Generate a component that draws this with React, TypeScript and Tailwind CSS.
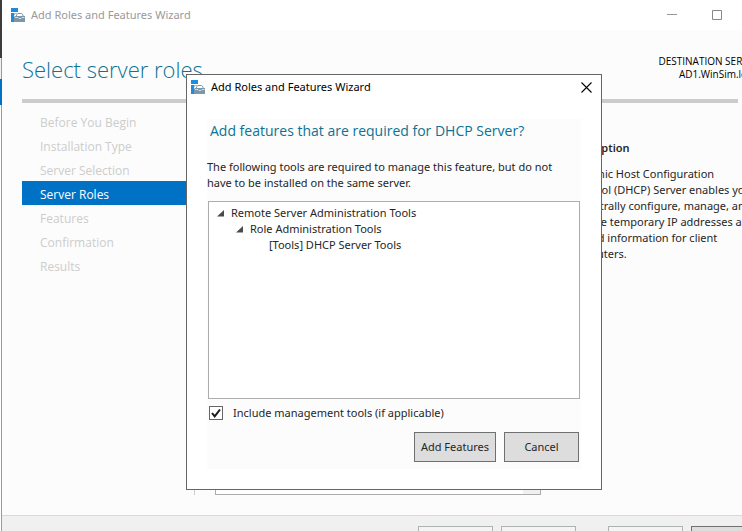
import { useState } from "react";

const steps = [
  "Before You Begin",
  "Installation Type",
  "Server Selection",
  "Server Roles",
  "Features",
  "Confirmation",
  "Results",
];

const descriptionLines = [
  "Dynamic Host Configuration",
  "Protocol (DHCP) Server enables you",
  "to centrally configure, manage, and",
  "provide temporary IP addresses and",
  "related information for client",
  "computers.",
];

function WizardIcon() {
  return (
    <svg width="15" height="15" viewBox="0 0 15 15" className="shrink-0" aria-hidden="true">
      <path d="M0 0h7v4H0zM0 5h3v9H0z" fill="#1e8bdc" />
      <path d="M3 5h3v1H4v1H3z" fill="#8cc4ec" />
      <path d="M5.5 8V6.8L7 5.5h3.5L12 6.8V8" fill="none" stroke="#7c97a8" />
      <path d="M4 8h10v6H3V9z" fill="#7c97a8" />
      <path d="M4 9.5h3l1 1h2l1-1h2.5" fill="none" stroke="#e8eef2" strokeWidth="0.8" />
    </svg>
  );
}

function Expander() {
  return (
    <svg width="7" height="7" viewBox="0 0 7 7" className="shrink-0" aria-hidden="true">
      <path d="M7 0v6.5H0z" fill="#4a4a4a" />
    </svg>
  );
}

function WizardDialog() {
  const [include, setInclude] = useState(true);
  return (
    <section
      role="dialog"
      aria-label="Add Roles and Features Wizard"
      className="absolute top-[74px] left-[186px] w-[416px] border border-[#666666] bg-white pb-5"
    >
      <header className="flex h-6 items-center pr-2 pl-1">
        <WizardIcon />
        <h2 className="ml-[5px] text-black">Add Roles and Features Wizard</h2>
        <button type="button" aria-label="Close" className="ml-auto p-px">
          <svg width="11" height="11" viewBox="0 0 11 11" className="block" aria-hidden="true">
            <path d="M.5.5l10 10M10.5.5l-10 10" stroke="#000" strokeWidth="1.1" />
          </svg>
        </button>
      </header>
      <div className="mx-5 mt-5 bg-[#fcfcfc]">
        <h3 className="pl-[3px] font-['Open_Sans','Noto_Sans',sans-serif] text-[14px] leading-6 text-[#0d7293]">
          Add features that are required for DHCP Server?
        </h3>
        <p className="mt-4 leading-4">
          The following tools are required to manage this feature, but do not
          <br />
          have to be installed on the same server.
        </p>
        <ul className="mt-[10px] mr-px ml-px h-[198px] border border-[#acacac] bg-white pt-[3px] pl-2 leading-4">
          <li>
            <div className="flex items-center gap-[7px]">
              <Expander />
              Remote Server Administration Tools
            </div>
            <ul className="pl-[19px]">
              <li>
                <div className="flex items-center gap-[7px]">
                  <Expander />
                  Role Administration Tools
                </div>
                <ul className="pl-[33px]">
                  <li>[Tools] DHCP Server Tools</li>
                </ul>
              </li>
            </ul>
          </li>
        </ul>
        <label className="mt-1 flex h-5 items-center pl-[2px]">
          <span className="grid">
            <input
              type="checkbox"
              checked={include}
              onChange={() => setInclude(!include)}
              className="col-start-1 row-start-1 size-[14px] appearance-none border border-[#666666] bg-white"
            />
            {include && (
              <svg width="14" height="14" viewBox="0 0 14 14" className="pointer-events-none col-start-1 row-start-1" aria-hidden="true">
                <path d="M3 7l2.7 3.4L11 3.5" fill="none" stroke="#1a1a1a" strokeWidth="2" />
              </svg>
            )}
          </span>
          <span className="ml-[10px]">Include management tools (if applicable)</span>
        </label>
        <div className="mt-[9px] flex justify-end gap-2 pr-[2px] pb-[7px]">
          <button type="button" className="h-[30px] w-[82px] border border-[#707070] bg-[#dddddd]">
            Add Features
          </button>
          <button type="button" className="h-[30px] w-[75px] border border-[#707070] bg-[#dddddd]">
            Cancel
          </button>
        </div>
      </div>
    </section>
  );
}

export default function App() {
  return (
    <div className="relative flex h-screen overflow-hidden bg-white font-['Noto_Sans','Open_Sans',sans-serif] text-[11px] text-[#262626]">
      <div className="flex w-[2px] shrink-0 flex-col">
        <div className="h-[58px] bg-[#3c3c3c]" />
        <div className="h-[21px] border-r border-[#9b9b9b] bg-[#f0f0f0]" />
        <div className="h-[26px] bg-[#0072c6]" />
        <div className="flex-1 border-r border-[#9b9b9b]" />
      </div>
      <div className="flex min-w-0 flex-1 flex-col bg-[#fcfcfc]">
        <header className="flex h-[30px] shrink-0 items-center bg-white pr-5 pl-[9px]">
          <WizardIcon />
          <h1 className="ml-[5px] text-[#999999]">Add Roles and Features Wizard</h1>
          <div className="ml-auto flex items-center gap-[35px]">
            <button type="button" aria-label="Minimize">
              <svg width="10" height="10" viewBox="0 0 10 10" className="block" aria-hidden="true">
                <path d="M0 4.5h10" stroke="#999" />
              </svg>
            </button>
            <button type="button" aria-label="Maximize">
              <svg width="10" height="10" viewBox="0 0 10 10" className="block" aria-hidden="true">
                <path d="M.5.5h9v9h-9z" fill="none" stroke="#888" />
              </svg>
            </button>
          </div>
        </header>

        <div className="flex h-[69px] shrink-0 justify-between pl-5 font-['Open_Sans','Noto_Sans',sans-serif]">
          <h2 className="pt-[23px] text-[22px] leading-8 font-light whitespace-nowrap text-[#0d7293]">Select server roles</h2>
          <p className="-mr-[18px] pt-[25px] text-right text-[10px] leading-[13px] whitespace-nowrap text-black">
            DESTINATION SERVER
            <br />
            AD1.WinSim.local
          </p>
        </div>
        <div className="mr-1 ml-5 h-1 shrink-0 bg-[#cccccc]" />

        <main className="flex min-h-0 flex-1 pb-5 pl-5">
          <nav className="w-[172px] shrink-0 pt-[6px] font-['Open_Sans','Noto_Sans',sans-serif] text-[12px]">
            <ul>
              {steps.map((step) => (
                <li key={step}>
                  <a
                    href="#"
                    className={
                      step === "Server Roles"
                        ? "block h-6 bg-[#0072c6] pt-1 pl-[18px] leading-5 text-white"
                        : "block h-6 pt-1 pl-[18px] leading-5 text-[#cccccc]"
                    }
                  >
                    {step}
                  </a>
                </li>
              ))}
            </ul>
          </nav>
          <div className="mt-6 w-px shrink-0 bg-[#cccccc]" />
          <div className="mt-16 ml-5 flex w-[326px] shrink-0 justify-end border border-[#acacac] bg-white">
            <div className="w-[17px] bg-[#f0f0f0]" />
          </div>
          <section className="ml-[27px] pt-[37px] whitespace-nowrap">
            <h3 className="leading-4 font-semibold">Description</h3>
            <p className="mt-[10px] leading-4">
              {descriptionLines.map((line) => (
                <span key={line} className="block">
                  {line}
                </span>
              ))}
            </p>
          </section>
        </main>

        <footer className="-mr-6 flex h-4 shrink-0 justify-end gap-2 border-t border-[#d9d9d9] bg-[#f0f0f0] pt-[10px]">
          <button type="button" className="h-[30px] w-[75px] shrink-0 border border-[#adb2b5] bg-[#f4f4f4] text-[#838383]">
            &lt; Previous
          </button>
          <button type="button" className="h-[30px] w-[75px] shrink-0 border border-[#adb2b5] bg-[#f4f4f4] text-[#838383]">
            Next &gt;
          </button>
          <button type="button" className="ml-6 h-[30px] w-[75px] shrink-0 border border-[#adb2b5] bg-[#f4f4f4] text-[#838383]">
            Install
          </button>
          <button type="button" className="h-[30px] w-[75px] shrink-0 border border-[#707070] bg-[#dddddd]">
            Cancel
          </button>
        </footer>
      </div>
      <WizardDialog />
    </div>
  );
}
